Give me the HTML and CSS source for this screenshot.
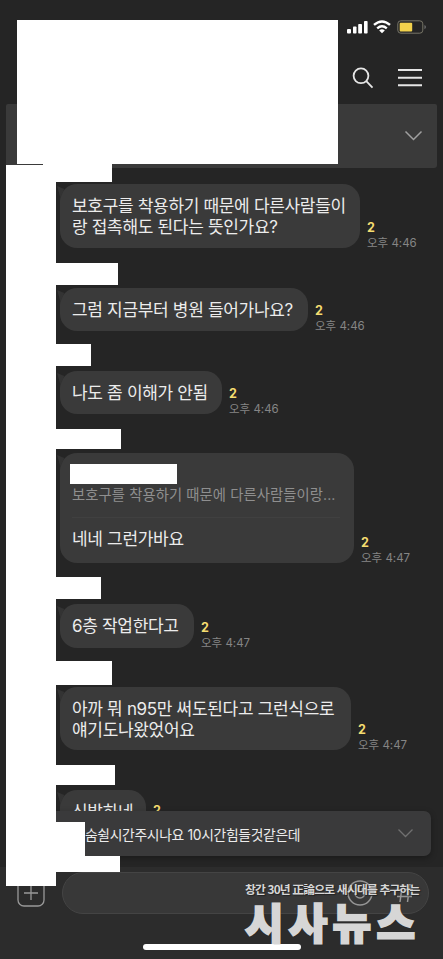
FILE: index.html
```html
<!DOCTYPE html>
<html lang="ko">
<head>
<meta charset="utf-8">
<title>채팅</title>
<link rel="stylesheet" href="styles.css">
</head>
<body>
<div class="screen">
  <header class="header">
    <div class="status">
      <svg width="22" height="14" viewBox="0 0 22 14" fill="#fff"><rect x="0" y="9" width="4" height="4.500" rx="1"/><rect x="6" y="6.500" width="3.500" height="7" rx=".8"/><rect x="11.200" y="4" width="3.800" height="9.500" rx=".8"/><rect x="17" y="1" width="3.600" height="12.500" rx=".8"/></svg>
      <svg class="wifi" width="18" height="14" viewBox="0 0 18 14" fill="none" stroke="#fff" stroke-width="2.400"><path d="M1 4.900Q9-2.100 17 4.900M4.200 8.300Q9 4.200 13.800 8.300"/><path d="M9 13.300 6.200 10.500Q9 8.200 11.800 10.500Z" fill="#fff" stroke="none"/></svg>
      <svg class="battery" width="30" height="14" viewBox="0 0 30 14"><rect x=".8" y=".8" width="25" height="12.400" rx="3" fill="none" stroke="#777567"/><rect x="2.700" y="2.700" width="12.500" height="8.800" rx="1" fill="#f2d24c"/><path d="M27.500 5v4.200q1.300-.5 1.300-2.100T27.500 5" fill="#777"/></svg>
    </div>
    <div class="tools">
      <svg width="22" height="22" viewBox="0 0 22 22" fill="none" stroke="#e6e6e6" stroke-width="1.800"><circle cx="9" cy="8.800" r="7.400"/><path d="m14.300 14.200 6.200 6.500"/></svg>
      <svg class="menu" width="26" height="22" viewBox="0 0 26 22" stroke="#e6e6e6" stroke-width="2"><path d="M1 3h24M1 10.800h24M1 18.300h24"/></svg>
    </div>
  </header>
  <div class="notice"><svg width="19" height="12" viewBox="0 0 19 12" fill="none" stroke="#a0a0a0" stroke-width="1.500"><path d="m1.500 1.500 8 8 8-8"/></svg></div>
  <main class="chat">
    <section class="msg m1"><div class="name"></div><div class="row"><div class="bubble"><p class="text">보호구를 착용하기 때문에 다른사람들이<br>랑 접촉해도 된다는 뜻인가요?</p></div><div class="meta"><b>2</b><span>오후 4:46</span></div></div></section>
    <section class="msg m2"><div class="name"></div><div class="row"><div class="bubble"><p class="text">그럼 지금부터 병원 들어가나요?</p></div><div class="meta"><b>2</b><span>오후 4:46</span></div></div></section>
    <section class="msg m3"><div class="name"></div><div class="row"><div class="bubble"><p class="text">나도 좀 이해가 안됨</p></div><div class="meta"><b>2</b><span>오후 4:46</span></div></div></section>
    <section class="msg m4"><div class="name"></div><div class="row"><div class="bubble reply"><div class="quoted"></div><p class="quote">보호구를 착용하기 때문에 다른사람들이랑...</p><p class="text">네네 그런가바요</p></div><div class="meta"><b>2</b><span>오후 4:47</span></div></div></section>
    <section class="msg m5"><div class="name"></div><div class="row"><div class="bubble"><p class="text">6층 작업한다고</p></div><div class="meta"><b>2</b><span>오후 4:47</span></div></div></section>
    <section class="msg m6"><div class="name"></div><div class="row"><div class="bubble"><p class="text">아까 뭐 n95만 써도된다고 그런식으로<br>얘기도나왔었어요</p></div><div class="meta"><b>2</b><span>오후 4:47</span></div></div></section>
    <section class="msg m7"><div class="name"></div><div class="row"><div class="bubble"><p class="text">신발하네</p></div><div class="meta"><b>2</b></div></div></section>
  </main>
  <footer class="composer">
    <svg class="plus" width="28" height="28" viewBox="0 0 28 28" fill="none" stroke="#999" stroke-width="1.300"><rect x="1" y="1" width="26" height="26" rx="6"/><path d="M14 7v14M7 14h14"/></svg>
    <div class="input">
      <svg width="26" height="26" viewBox="0 0 26 26" fill="none" stroke="#969696" stroke-width="1.500"><circle cx="13" cy="13" r="12"/><path d="M8 11v2a5 5 0 0 0 10 0v-2M10.500 8v3M15.500 8v3"/></svg>
      <svg class="hash" width="18" height="20" viewBox="0 0 18 20" fill="none" stroke="#969696" stroke-width="1.500"><path d="M6.500 1 4 19M14 1l-2.500 18M2 6.500h15M1 13.500h15"/></svg>
    </div>
  </footer>
  <div class="home"></div>
  <div class="toast"><span>숨쉴시간주시나요 10시간힘들것같은데</span><svg width="17" height="11" viewBox="0 0 17 11" fill="none" stroke="#707070" stroke-width="1.300"><path d="m1.500 1.500 7 7 7-7"/></svg></div>
  <div class="mask mask-title"></div>
  <div class="mask mask-side"></div>
  <div class="mask mask-top"></div>
  <div class="mask mask-toast"></div>
  <div class="mask mask-low"></div>
  <div class="watermark"><div class="slogan">창간 30년 正論으로 새시대를 추구하는</div><div class="brand"><span>시</span><span>사</span><span>뉴</span><span>스</span></div></div>
</div>
</body>
</html>
```
FILE: styles.css
```css
* { box-sizing: border-box; }
body { margin: 0; background: #252525; }
p { margin: 0; }
svg { display: block; flex: none; }
.screen {
  position: relative;
  width: 443px;
  height: 959px;
  overflow: hidden;
  display: flex;
  flex-direction: column;
  background: #252525;
  color: #ececec;
  font-family: Inter, "Noto Sans CJK KR", sans-serif;
  white-space: nowrap;
}
.header { height: 104px; flex: none; padding: 20px 16px 0 0; }
.status { display: flex; justify-content: flex-end; height: 46px; }
.wifi { margin-left: 4px; }
.battery { margin-left: 6px; }
.tools { display: flex; justify-content: flex-end; padding-right: 4px; gap: 23px; margin-top: 1px; }
.notice {
  height: 64px; flex: none; margin: 0 6px; padding-right: 14px;
  display: flex; align-items: center; justify-content: flex-end;
  background: #3a3a3a; border-radius: 2px 2px 3px 3px;
}
.chat { height: 699px; flex: none; overflow: hidden; padding-left: 56px; }
.msg { display: flex; flex-direction: column; }
.name { background: #fff; flex: none; }
.row { display: flex; align-items: flex-end; padding-left: 4px; }
.bubble {
  position: relative; height: 43px; padding: 12px 0 0 12px;
  background: #3a3a3a; border-radius: 17px;
}
.bubble::before {
  content: ""; position: absolute; left: -3px; top: 2px;
  width: 12px; height: 12px; background: #333;
  clip-path: polygon(0 0, 60% 25%, 30% 100%);
}
.text { font-size: 17px; line-height: 21px; letter-spacing: -0.32px; }
.meta {
  margin-left: 7px; display: flex; flex-direction: column; position: relative; top: 3px;
  font-size: 11.5px; line-height: 15px; letter-spacing: 0; color: #858585;
}
.meta b { font-size: 12.5px; line-height: 16px; color: #f4dc70; }
.m1 .name { height: 14px; width: 56px; margin-bottom: 2px; }
.m1 .bubble { width: 300px; height: 64px; }
.m2 .name { height: 22px; width: 62px; margin: 15px 0 3px; }
.m2 .bubble { width: 248px; }
.m3 .name { height: 22px; width: 35px; margin: 13px 0 5px; }
.m3 .bubble { width: 162px; }
.m4 .name { height: 20px; width: 65px; margin: 15px 0 4px; }
.m4 .bubble { width: 294px; height: 110px; padding-top: 11px; }
.m5 .name { height: 22px; width: 45px; margin: 14px 0 5px; }
.m5 .bubble { width: 134px; height: 44px; }
.m6 .name { height: 24px; width: 56px; margin: 13px 0 2px; }
.m6 .bubble { width: 291px; height: 63px; }
.m7 .name { height: 20px; width: 59px; margin: 15px 0 5px; }
.m7 .bubble { width: 86px; }
.m7 .row { align-items: flex-start; }
.m7 .meta { top: 13px; }
.quoted { width: 107px; height: 20px; margin-left: -2px; background: #fff; }
.quote {
  height: 34px; margin-right: 14px; border-bottom: 1px solid #404040;
  font-size: 14.3px; line-height: 22px; color: #8f8f8f; letter-spacing: 0.1px;
}
.reply .text { margin-top: 11px; }
.composer {
  flex: 1; display: flex; align-items: flex-start; gap: 17px;
  padding: 5px 14px 0 17px; background: #2c2c2c;
}
.plus { margin-top: 7px; }
.input {
  flex: 1; height: 42px; display: flex; align-items: center; justify-content: flex-end;
  gap: 23px; padding-right: 14px;
  border: 1px solid #444; border-radius: 21px; background: #383838;
}
.home { position: absolute; left: 143px; top: 944px; width: 158px; height: 6px; border-radius: 3px; background: #fff; }
.toast {
  position: absolute; left: 12px; top: 811px; width: 419px; height: 45px;
  display: flex; align-items: center; justify-content: space-between;
  padding: 0 17px 0 73px; border-radius: 7px; background: #3a3a3b;
  box-shadow: 0 2px 6px rgba(0, 0, 0, .3); font-size: 13.8px; letter-spacing: -0.32px;
}
.mask { position: absolute; background: #fff; }
.mask-title { left: 17px; top: 20px; width: 321px; height: 144px; }
.mask-side { left: 6px; top: 165px; width: 50px; height: 721px; }
.mask-top { left: 43px; top: 164px; width: 69px; height: 18px; }
.mask-toast { left: 50px; top: 822px; width: 35px; height: 34px; }
.mask-low { left: 50px; top: 856px; width: 70px; height: 16px; }
.watermark {
  position: absolute; left: 245px; top: 880px; width: 178px; color: #d6d6d6;
  font-family: "Noto Sans CJK KR", sans-serif;
}
.slogan {
  font-size: 11.8px; line-height: 18px; font-weight: 700; letter-spacing: -0.82px;
  text-shadow: 1px 1px 1px #222;
}
.brand {
  display: flex; margin-top: -1px; font-size: 42px; line-height: 48px; font-weight: 900;
  -webkit-text-stroke: 2px #d6d6d6; text-shadow: 1px 1px 1px #222;
}
.brand span { width: 43.8px; }
```
